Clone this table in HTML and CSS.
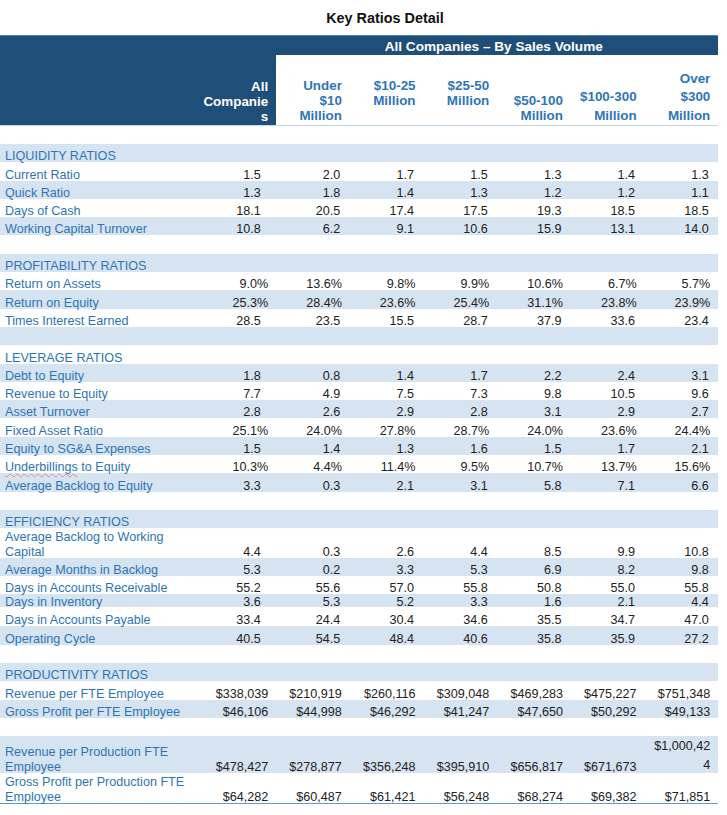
FILE: index.html
```html
<!DOCTYPE html>
<html lang="en">
<head>
<meta charset="utf-8">
<title>Key Ratios Detail</title>
<link rel="stylesheet" href="styles.css">
</head>
<body>
<div class="sheet">
  <div class="title">Key Ratios Detail</div>
  <div class="head">
    <div class="h-blank"></div>
    <div class="h-all">All<br>Companie<br>s</div>
    <div class="h-group">All Companies – By Sales Volume</div>
    <div class="h-col">Under<br>$10<br>Million</div>
    <div class="h-col raised">$10-25<br>Million</div>
    <div class="h-col raised">$25-50<br>Million</div>
    <div class="h-col">$50-100<br>Million</div>
    <div class="h-col spread">$100-300<br>Million</div>
    <div class="h-col spread">Over<br>$300<br>Million</div>
  </div>

  <div class="table">
    <div class="row alt sec"><div>LIQUIDITY RATIOS</div></div>
    <div class="row dec"><div>Current Ratio</div><div>1.5</div><div>2.0</div><div>1.7</div><div>1.5</div><div>1.3</div><div>1.4</div><div>1.3</div></div>
    <div class="row alt dec"><div>Quick Ratio</div><div>1.3</div><div>1.8</div><div>1.4</div><div>1.3</div><div>1.2</div><div>1.2</div><div>1.1</div></div>
    <div class="row dec"><div>Days of Cash</div><div>18.1</div><div>20.5</div><div>17.4</div><div>17.5</div><div>19.3</div><div>18.5</div><div>18.5</div></div>
    <div class="row alt dec"><div>Working Capital Turnover</div><div>10.8</div><div>6.2</div><div>9.1</div><div>10.6</div><div>15.9</div><div>13.1</div><div>14.0</div></div>
    <div class="row"></div>

    <div class="row alt sec"><div>PROFITABILITY RATIOS</div></div>
    <div class="row"><div>Return on Assets</div><div>9.0%</div><div>13.6%</div><div>9.8%</div><div>9.9%</div><div>10.6%</div><div>6.7%</div><div>5.7%</div></div>
    <div class="row alt"><div>Return on Equity</div><div>25.3%</div><div>28.4%</div><div>23.6%</div><div>25.4%</div><div>31.1%</div><div>23.8%</div><div>23.9%</div></div>
    <div class="row dec"><div>Times Interest Earned</div><div>28.5</div><div>23.5</div><div>15.5</div><div>28.7</div><div>37.9</div><div>33.6</div><div>23.4</div></div>
    <div class="row alt"></div>

    <div class="row sec"><div>LEVERAGE RATIOS</div></div>
    <div class="row alt dec"><div>Debt to Equity</div><div>1.8</div><div>0.8</div><div>1.4</div><div>1.7</div><div>2.2</div><div>2.4</div><div>3.1</div></div>
    <div class="row dec"><div>Revenue to Equity</div><div>7.7</div><div>4.9</div><div>7.5</div><div>7.3</div><div>9.8</div><div>10.5</div><div>9.6</div></div>
    <div class="row alt dec"><div>Asset Turnover</div><div>2.8</div><div>2.6</div><div>2.9</div><div>2.8</div><div>3.1</div><div>2.9</div><div>2.7</div></div>
    <div class="row"><div>Fixed Asset Ratio</div><div>25.1%</div><div>24.0%</div><div>27.8%</div><div>28.7%</div><div>24.0%</div><div>23.6%</div><div>24.4%</div></div>
    <div class="row alt dec"><div>Equity to SG&amp;A Expenses</div><div>1.5</div><div>1.4</div><div>1.3</div><div>1.6</div><div>1.5</div><div>1.7</div><div>2.1</div></div>
    <div class="row"><div><span class="spell">Underbillings</span> to Equity</div><div>10.3%</div><div>4.4%</div><div>11.4%</div><div>9.5%</div><div>10.7%</div><div>13.7%</div><div>15.6%</div></div>
    <div class="row alt dec"><div>Average Backlog to Equity</div><div>3.3</div><div>0.3</div><div>2.1</div><div>3.1</div><div>5.8</div><div>7.1</div><div>6.6</div></div>
    <div class="row"></div>

    <div class="row alt sec"><div>EFFICIENCY RATIOS</div></div>
    <div class="row dec two"><div>Average Backlog to Working Capital</div><div>4.4</div><div>0.3</div><div>2.6</div><div>4.4</div><div>8.5</div><div>9.9</div><div>10.8</div></div>
    <div class="row alt dec"><div>Average Months in Backlog</div><div>5.3</div><div>0.2</div><div>3.3</div><div>5.3</div><div>6.9</div><div>8.2</div><div>9.8</div></div>
    <div class="row dec ar"><div>Days in Accounts Receivable</div><div>55.2</div><div>55.6</div><div>57.0</div><div>55.8</div><div>50.8</div><div>55.0</div><div>55.8</div></div>
    <div class="row alt dec inv"><div>Days in Inventory</div><div>3.6</div><div>5.3</div><div>5.2</div><div>3.3</div><div>1.6</div><div>2.1</div><div>4.4</div></div>
    <div class="row dec ap"><div>Days in Accounts Payable</div><div>33.4</div><div>24.4</div><div>30.4</div><div>34.6</div><div>35.5</div><div>34.7</div><div>47.0</div></div>
    <div class="row alt dec"><div>Operating Cycle</div><div>40.5</div><div>54.5</div><div>48.4</div><div>40.6</div><div>35.8</div><div>35.9</div><div>27.2</div></div>
    <div class="row"></div>

    <div class="row alt sec"><div>PRODUCTIVITY RATIOS</div></div>
    <div class="row"><div>Revenue per FTE Employee</div><div>$338,039</div><div>$210,919</div><div>$260,116</div><div>$309,048</div><div>$469,283</div><div>$475,227</div><div>$751,348</div></div>
    <div class="row alt"><div>Gross Profit per FTE Employee</div><div>$46,106</div><div>$44,998</div><div>$46,292</div><div>$41,247</div><div>$47,650</div><div>$50,292</div><div>$49,133</div></div>
    <div class="row"></div>
    <div class="row alt tall"><div>Revenue per Production FTE Employee</div><div>$478,427</div><div>$278,877</div><div>$356,248</div><div>$395,910</div><div>$656,817</div><div>$671,673</div><div class="wrapv">$1,000,42<br>4</div></div>
    <div class="row two last"><div>Gross Profit per Production FTE Employee</div><div>$64,282</div><div>$60,487</div><div>$61,421</div><div>$56,248</div><div>$68,274</div><div>$69,382</div><div>$71,851</div></div>
  </div>
</div>
</body>
</html>
```

FILE: styles.css
```css
html, body {
  margin: 0;
  padding: 0;
  background: #ffffff;
}

.sheet {
  width: 718px;
  font-family: "Liberation Sans", Arial, sans-serif;
  color: #222222;
}

.title {
  height: 35px;
  line-height: 37px;
  padding-left: 52px;
  text-align: center;
  font-size: 14.4px;
  font-weight: bold;
  color: #111111;
}

.head {
  display: grid;
  grid-template-columns: 202px repeat(7, 73.7px);
  grid-template-rows: 19px 70px;
  border-top: 1px solid #4a7fb8;
  border-bottom: 1px solid #c3d7ec;
  font-size: 13.4px;
  font-weight: bold;
}

.h-blank {
  grid-column: 1;
  grid-row: 1 / 3;
  background: #1f4e79;
}

.h-all {
  grid-column: 2;
  grid-row: 1 / 3;
  background: #1f4e79;
  color: #ffffff;
  text-align: right;
  padding-right: 7.5px;
  line-height: 15px;
  align-self: stretch;
  display: flex;
  flex-direction: column;
  justify-content: flex-end;
  padding-bottom: 1px;
}

.h-group {
  grid-column: 3 / 9;
  grid-row: 1;
  background: #1f4e79;
  color: #ffffff;
  text-align: center;
  font-size: 13.6px;
  line-height: 19px;
  padding-top: 1px;
  padding-right: 6px;
  box-sizing: border-box;
}

.h-col {
  grid-row: 2;
  background: #ffffff;
  color: #2f75b8;
  text-align: right;
  padding-right: 7.5px;
  line-height: 15px;
  display: flex;
  flex-direction: column;
  justify-content: flex-end;
  padding-bottom: 2px;
}

.h-col.raised {
  padding-bottom: 17px;
}

.h-col.spread {
  line-height: 18.5px;
  padding-bottom: 0;
}

.table {
  padding-top: 18px;
}

.row {
  display: grid;
  grid-template-columns: 202px repeat(7, 73.7px);
  grid-template-rows: minmax(0, 1fr);
  align-items: end;
  height: 18.3px;
  font-size: 12.6px;
  line-height: 15px;
}

.row.alt {
  background: #d6e4f2;
}

.row > div {
  text-align: right;
  padding-right: 7.5px;
  white-space: nowrap;
  margin-bottom: -2px;
}

.row > div:first-child {
  text-align: left;
  padding: 0 0 0 5px;
  color: #2e74b5;
  white-space: normal;
}

.dec > div {
  padding-right: 9px;
}

.dec > div:nth-child(2) {
  padding-right: 15px;
}

.row.two {
  height: 29.5px;
}

.row.ar {
  height: 18.4px;
}

.row.inv {
  height: 13px;
  line-height: 13px;
}

.row.ap {
  height: 19px;
}

.row.tall {
  height: 37px;
}

.row.last {
  border-bottom: 1px solid #5b9bd5;
}

.wrapv {
  line-height: 19px;
}

.spell {
  text-decoration: underline wavy #e48a8a;
  text-decoration-thickness: 1px;
  text-underline-offset: 2px;
}
```
